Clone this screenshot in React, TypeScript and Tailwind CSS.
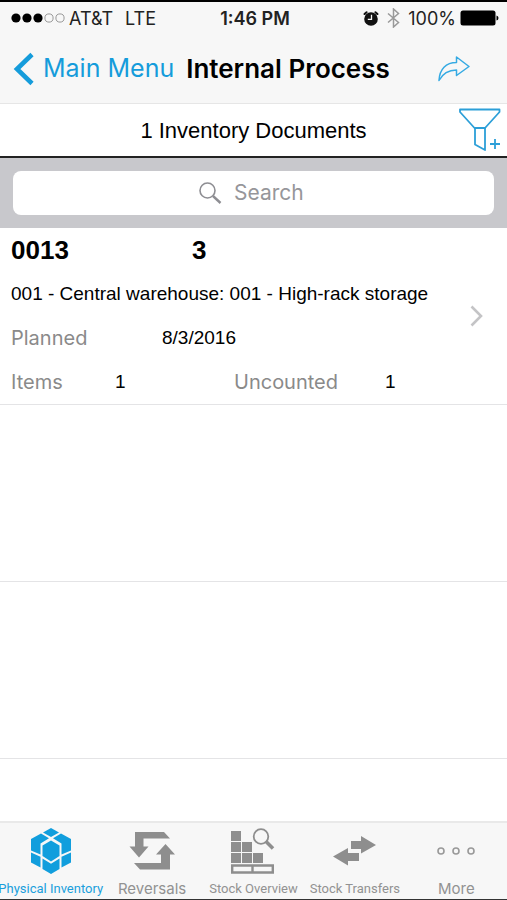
import React from "react";

const sans = "font-['Inter','Liberation_Sans',sans-serif]";
const arial = "font-['Liberation_Sans',Arial,sans-serif]";

function StatusBar() {
  return (
    <div className="grid grid-cols-[1fr_auto_1fr] items-center h-8 pl-[11px] pr-2 text-[18px] text-[#222]">
      <div className="flex items-center gap-1">
        <svg width="54" height="12" viewBox="0 0 54 12" aria-hidden="true">
          <circle cx="5" cy="6" r="4.6" fill="#000" />
          <circle cx="16" cy="6" r="4.6" fill="#000" />
          <circle cx="27" cy="6" r="4.6" fill="#000" />
          <circle cx="38" cy="6" r="4.1" fill="none" stroke="#999" />
          <circle cx="49" cy="6" r="4.1" fill="none" stroke="#999" />
        </svg>
        <span>AT&amp;T</span>
        <span className="ml-2">LTE</span>
      </div>
      <div className="font-semibold">1:46 PM</div>
      <div className="flex items-center justify-end gap-2">
        <svg width="16" height="17" viewBox="0 0 16 17" aria-hidden="true">
          <circle cx="8" cy="9" r="6.8" fill="#111" />
          <path
            d="M1.5 4 3.6 2.2M14.5 4 12.4 2.200"
            stroke="#111"
            strokeWidth="2"
            strokeLinecap="round"
          />
          <path d="M8.5 4.8V9.3H4.8" fill="none" stroke="#f7f7f7" strokeWidth="1.3" />
        </svg>
        <svg width="13" height="20" viewBox="0 0 13 20" aria-hidden="true">
          <path
            d="M1 5.5 11.5 14.5 6.5 19V1L11.5 5.5 1 14.5"
            fill="none"
            stroke="#999"
            strokeWidth="1.5"
          />
        </svg>
        <div className="flex items-center gap-1">
          <span>100%</span>
          <svg width="39" height="16" viewBox="0 0 39 16" aria-hidden="true">
            <rect x=".5" y=".5" width="35" height="15" rx="2.5" fill="#000" />
            <path d="M36.5 5.5q2 .5 2 2.5t-2 2.5z" fill="#000" />
          </svg>
        </div>
      </div>
    </div>
  );
}

function NavBar() {
  return (
    <div className="flex items-center h-[69px] pl-3 pr-9">
      <a href="#menu" className="flex items-center gap-2 text-[25px] text-[#159cdb]">
        <svg width="23" height="34" viewBox="0 0 23 34" aria-hidden="true">
          <path d="M20 2.5 5 17 20 31.5" fill="none" stroke="currentColor" strokeWidth="4.6" />
        </svg>
        Main Menu
      </a>
      <h1 className="ml-3 text-[26px] font-semibold text-black">Internal Process</h1>
      <button type="button" aria-label="Share" className="ml-auto">
        <svg width="34" height="28" viewBox="0 0 34 28" aria-hidden="true">
          <path
            d="M2 25.5C2.5 14 9 7.500 19.500 7.500V2L32 11.500 19.500 20.500V15C11 15 6 18 2 25.500Z"
            fill="none"
            stroke="#35aae3"
            strokeWidth="1.5"
            strokeLinejoin="round"
          />
        </svg>
      </button>
    </div>
  );
}

function FilterIcon() {
  return (
    <svg width="42" height="44" viewBox="0 0 42 44" aria-hidden="true">
      <g fill="none" stroke="#2c9fd8" strokeWidth="1.8" strokeLinejoin="round">
        <path d="M1 1.5H40.500V4L26 20H15.500L1 4Z" />
        <path d="M16 20V36.500L26 42V20" />
        <path d="M36 31V41M31 36H41" />
      </g>
    </svg>
  );
}

function SearchBar() {
  return (
    <div className="bg-[#c8c8cc] p-[13px]">
      <label className="flex items-center justify-center gap-3 h-11 rounded-lg bg-white">
        <svg width="23" height="22" viewBox="0 0 23 22" aria-hidden="true">
          <circle cx="8.5" cy="8.5" r="7.5" fill="none" stroke="#8e8e93" strokeWidth="1.6" />
          <path d="M14 14 21.500 21" stroke="#8e8e93" strokeWidth="2.4" />
        </svg>
        <input
          type="text"
          aria-label="Search"
          placeholder="Search"
          className="w-[74px] text-[21px] outline-none placeholder:text-[#96969a]"
        />
      </label>
    </div>
  );
}

function DocumentRow() {
  return (
    <a
      href="#document"
      className={`flex items-center justify-between h-[177px] pl-[11px] pr-6 border-b border-[#e4e4e6] text-black ${arial}`}
    >
      <div className="flex flex-col">
        <div className="flex items-center h-11 text-[26px] font-bold">
          <span className="w-[181px]">0013</span>
          <span>3</span>
        </div>
        <div className="flex items-center h-11 text-[19px]">
          001 - Central warehouse: 001 - High-rack storage
        </div>
        <dl className="flex items-center h-11 text-[19px]">
          <dt className={`w-[151px] text-[20px] text-[#8a8a8a] ${sans}`}>Planned</dt>
          <dd>8/3/2016</dd>
        </dl>
        <dl className="flex items-center h-11 text-[19px]">
          <dt className={`w-[104px] text-[20px] text-[#8a8a8a] ${sans}`}>Items</dt>
          <dd className="w-[119px]">1</dd>
          <dt className={`w-[151px] text-[20px] text-[#8a8a8a] ${sans}`}>Uncounted</dt>
          <dd>1</dd>
        </dl>
      </div>
      <svg width="13" height="22" viewBox="0 0 13 22" aria-hidden="true">
        <path d="M1.5 1.5 11 11 1.5 20.500" fill="none" stroke="#c4c4c6" strokeWidth="2.6" />
      </svg>
    </a>
  );
}

function PhysicalInventoryIcon() {
  return (
    <svg width="42" height="48" viewBox="0 0 42 48" fill="#119edd" aria-hidden="true">
      <path d="M21 1 29 5.500 21 10 13 5.500Z" />
      <path d="M11 6.500 19 11.300 10.500 16.500V27.500L1 23.500V12Z" />
      <path d="M31 6.500 23 11.300 31.500 16.500V27.500L41 23.500V12Z" />
      <path d="M21 13.500 29.500 18.500V29L21 34.500 12.500 29V18.500Z" />
      <path d="M1 25.500 10.500 29.700V40.500L1 35.500Z" />
      <path d="M41 25.500 31.500 29.700V40.500L41 35.500Z" />
      <path d="M12.500 31.500 21 36.700 29.500 31.500V42L21 47 12.500 42Z" />
    </svg>
  );
}

function ReversalsIcon() {
  return (
    <svg width="46" height="38" viewBox="0 0 46 38" fill="#8e8e8e" aria-hidden="true">
      <path d="M6 0H35L41 6.500H14.500V14.500H19.500L10 25.500.5 14.500H6Z" />
      <path d="M36.500 12 46 22.500H41V37.500H11L5 31H32V22.500H27Z" />
    </svg>
  );
}

function StockOverviewIcon() {
  return (
    <svg width="44" height="46" viewBox="0 0 44 46" fill="#8e8e8e" aria-hidden="true">
      <path d="M0 3H10V13H0ZM0 14H10V24H0ZM11 14H21V24H11ZM0 25H10V35H0ZM11 25H21V35H11ZM22 25H32V35H22Z" />
      <path
        d="M1.200 37.500H41.800V44.500H1.200ZM21.500 37V45"
        fill="none"
        stroke="#8e8e8e"
        strokeWidth="2.4"
      />
      <circle cx="30" cy="8.500" r="7.300" fill="#f7f7f7" stroke="#8e8e8e" strokeWidth="1.800" />
      <path d="M35 13.500 42 20.500" stroke="#8e8e8e" strokeWidth="3.500" />
    </svg>
  );
}

function StockTransfersIcon() {
  return (
    <svg width="44" height="30" viewBox="0 0 44 30" fill="#8e8e8e" aria-hidden="true">
      <path d="M18 5H28V0L43 9 28 17.500V13H18Z" />
      <path d="M26 17H15V12L0 20.500 15 29.500V25H26Z" />
    </svg>
  );
}

function MoreIcon() {
  return (
    <svg width="38" height="8" viewBox="0 0 38 8" fill="none" stroke="#999" aria-hidden="true">
      <circle cx="4" cy="4" r="3" strokeWidth="1.6" />
      <circle cx="19" cy="4" r="3" strokeWidth="1.6" />
      <circle cx="34" cy="4" r="3" strokeWidth="1.6" />
    </svg>
  );
}

const narrow = "text-[13px] font-['Roboto','Liberation_Sans',sans-serif]";
const wide = "text-[15px] font-['Inter','Liberation_Sans',sans-serif]";

const tabs = [
  { label: "Physical Inventory", icon: <PhysicalInventoryIcon />, font: narrow, active: true },
  { label: "Reversals", icon: <ReversalsIcon />, font: wide },
  { label: "Stock Overview", icon: <StockOverviewIcon />, font: narrow },
  { label: "Stock Transfers", icon: <StockTransfersIcon />, font: narrow },
  { label: "More", icon: <MoreIcon />, font: wide },
];

function TabBar() {
  return (
    <nav className="grid grid-cols-5 pt-1 bg-[#f7f7f7] border-t-2 border-t-[#e9e9e9] border-b border-b-[#333]">
      {tabs.map((tab) => (
        <button key={tab.label} type="button" className="flex flex-col items-center min-w-0">
          <span className="flex items-center justify-center h-12">{tab.icon}</span>
          <span
            className={`flex items-end h-6 leading-5 whitespace-nowrap ${tab.font} ${
              tab.active ? "text-[#1a9fdc]" : "text-[#929292]"
            }`}
          >
            {tab.label}
          </span>
        </button>
      ))}
    </nav>
  );
}

export default function App() {
  return (
    <div className={`flex flex-col min-h-screen bg-white ${sans}`}>
      <header className="bg-[#f7f7f7] border-t-2 border-t-black border-b border-b-[#e6e6e6]">
        <StatusBar />
        <NavBar />
      </header>
      <div className="grid grid-cols-[1fr_auto_1fr] items-center h-[54px] border-b-2 border-[#222]">
        <h2 className={`col-start-2 text-[22px] text-black ${arial}`}>1 Inventory Documents</h2>
        <button type="button" aria-label="Add filter" className="justify-self-end mr-[6px]">
          <FilterIcon />
        </button>
      </div>
      <SearchBar />
      <main className="grow">
        <DocumentRow />
        <div className="h-[177px] border-b border-[#e4e4e6]" />
        <div className="h-[177px] border-b border-[#e4e4e6]" />
      </main>
      <TabBar />
    </div>
  );
}
